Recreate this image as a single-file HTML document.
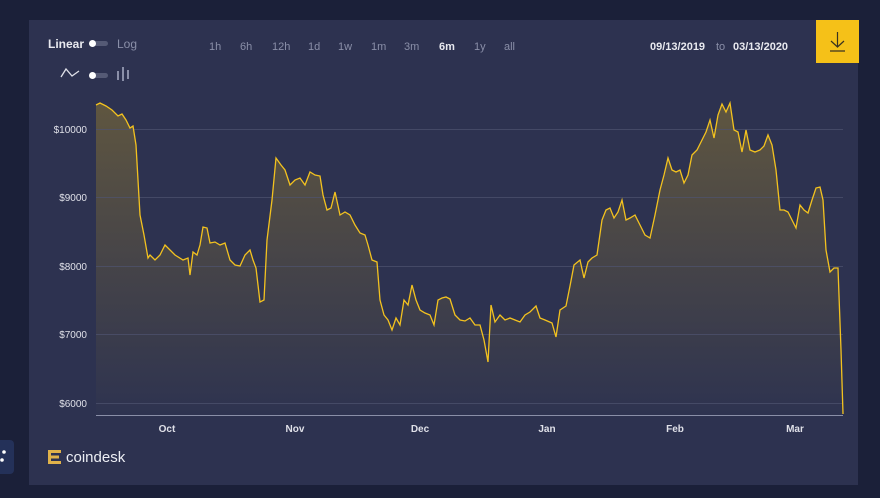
<!DOCTYPE html>
<html><head><meta charset="utf-8"><style>
html,body{margin:0;padding:0;width:880px;height:498px;overflow:hidden;background:#1b2039;font-family:"Liberation Sans",sans-serif;}
.panel{position:absolute;left:29px;top:20px;width:829px;height:465px;background:#2d3250;}
.t{position:absolute;font-size:11px;color:#8a8fa8;}
.w{color:#e8e9ef;font-weight:bold;}
.dl{position:absolute;left:816px;top:20px;width:43px;height:43px;background:#f5c118;}
.side{position:absolute;left:0;top:440px;width:14px;height:34px;background:#243159;border-radius:0 4px 4px 0;}
</style></head><body>
<div class="side"></div>
<div class="panel"></div>
<div class="t w" style="left:48px;top:37px;font-size:12px;">Linear</div>
<div style="position:absolute;left:90px;top:41px;width:18px;height:5px;background:#555a75;border-radius:3px"></div>
<div style="position:absolute;left:89px;top:40px;width:7px;height:7px;background:#fff;border-radius:50%"></div>
<div class="t" style="left:117px;top:37px;font-size:12px;">Log</div>
<svg style="position:absolute;left:60px;top:67px" width="20" height="12"><path d="M1 10 L6 2 L12 9 L19 4" stroke="#dfe0e8" fill="none" stroke-width="1.3"/></svg>
<div style="position:absolute;left:90px;top:73px;width:18px;height:5px;background:#555a75;border-radius:3px"></div>
<div style="position:absolute;left:89px;top:72px;width:7px;height:7px;background:#fff;border-radius:50%"></div>
<svg style="position:absolute;left:116px;top:66px" width="14" height="16"><g stroke="#8a8fa8" stroke-width="2"><path d="M2 5V14M7 1V15M12 4V13"/></g></svg>
<div class="t" style="left:209px;top:41px">1h</div>
<div class="t" style="left:240px;top:41px">6h</div>
<div class="t" style="left:272px;top:41px">12h</div>
<div class="t" style="left:308px;top:41px">1d</div>
<div class="t" style="left:338px;top:41px">1w</div>
<div class="t" style="left:371px;top:41px">1m</div>
<div class="t" style="left:404px;top:41px">3m</div>
<div class="t w" style="left:439px;top:41px">6m</div>
<div class="t" style="left:474px;top:41px">1y</div>
<div class="t" style="left:504px;top:41px">all</div>
<div class="t w" style="left:650px;top:41px">09/13/2019</div>
<div class="t" style="left:716px;top:41px">to</div>
<div class="t w" style="left:733px;top:41px">03/13/2020</div>
<div class="dl"><svg width="43" height="43"><path d="M21.5 12V27M15 21L21.5 27L28 21M14 31H29" stroke="#3a3320" stroke-width="1.2" fill="none"/></svg></div>
<svg style="position:absolute;left:0;top:0" width="880" height="498">
<defs><linearGradient id="g" x1="0" y1="0" x2="0" y2="1"><stop offset="0" stop-color="#5f5640"/><stop offset="1" stop-color="#2e3350"/></linearGradient></defs>
<polygon fill="url(#g)" points="96,415 96,105 100,103 106,106 112,110 118,116 122,114 126,120 130,128 133,126 136,145 140,215 144,235 148,258 150,255 155,260 160,255 165,245 170,250 175,255 183,260 188,258 190,275 193,252 197,255 200,245 203,227 207,228 210,243 215,242 220,245 225,243 230,260 235,265 240,266 245,255 250,250 253,260 256,268 260,302 264,300 267,240 272,200 276,158 281,165 285,170 290,185 295,180 300,178 305,185 310,172 315,175 320,176 323,195 327,210 331,208 335,192 340,215 345,212 350,215 355,225 360,233 365,235 368,245 372,260 377,262 380,300 384,315 388,320 392,330 396,318 400,325 404,300 408,305 412,285 416,300 420,310 425,313 430,315 434,325 438,300 442,298 446,297 450,299 455,315 460,320 465,321 470,318 475,325 480,325 484,340 488,362 491,305 495,322 500,315 505,320 510,318 515,320 520,322 525,315 530,312 536,306 540,318 545,320 552,323 556,337 560,310 566,306 570,286 574,265 580,260 584,278 588,262 592,258 597,255 602,220 606,210 610,208 614,218 618,212 622,200 626,220 630,218 635,215 640,225 645,235 650,238 655,215 660,190 664,175 668,158 672,170 676,172 680,170 684,183 688,175 692,155 697,150 702,140 706,132 710,120 714,138 718,115 722,104 726,112 730,103 734,130 738,132 742,152 746,130 750,150 755,152 760,150 764,146 768,135 772,145 776,170 780,210 784,210 788,212 792,220 796,228 800,205 804,210 808,213 812,200 816,188 820,187 823,200 826,250 830,272 834,268 838,268 841,350 843,414 843,415"/>
<g stroke="#4f5470" stroke-width="1" opacity="0.7"><path d="M96 129.5H843M96 197.5H843M96 266.5H843M96 334.5H843M96 403.5H843"/></g>
<path d="M96 415.5H843" stroke="#8a8fa8" stroke-width="1"/>
<g font-size="10" fill="#dfe0e8" text-anchor="end" font-family="Liberation Sans"><text x="87" y="133">$10000</text><text x="87" y="201">$9000</text><text x="87" y="270">$8000</text><text x="87" y="338">$7000</text><text x="87" y="407">$6000</text></g>
<g font-size="10" fill="#dfe0e8" font-weight="bold" text-anchor="middle" font-family="Liberation Sans"><text x="167" y="432">Oct</text><text x="295" y="432">Nov</text><text x="420" y="432">Dec</text><text x="547" y="432">Jan</text><text x="675" y="432">Feb</text><text x="795" y="432">Mar</text></g>
<polyline fill="none" stroke="#f3c21f" stroke-width="1.3" points="96,105 100,103 106,106 112,110 118,116 122,114 126,120 130,128 133,126 136,145 140,215 144,235 148,258 150,255 155,260 160,255 165,245 170,250 175,255 183,260 188,258 190,275 193,252 197,255 200,245 203,227 207,228 210,243 215,242 220,245 225,243 230,260 235,265 240,266 245,255 250,250 253,260 256,268 260,302 264,300 267,240 272,200 276,158 281,165 285,170 290,185 295,180 300,178 305,185 310,172 315,175 320,176 323,195 327,210 331,208 335,192 340,215 345,212 350,215 355,225 360,233 365,235 368,245 372,260 377,262 380,300 384,315 388,320 392,330 396,318 400,325 404,300 408,305 412,285 416,300 420,310 425,313 430,315 434,325 438,300 442,298 446,297 450,299 455,315 460,320 465,321 470,318 475,325 480,325 484,340 488,362 491,305 495,322 500,315 505,320 510,318 515,320 520,322 525,315 530,312 536,306 540,318 545,320 552,323 556,337 560,310 566,306 570,286 574,265 580,260 584,278 588,262 592,258 597,255 602,220 606,210 610,208 614,218 618,212 622,200 626,220 630,218 635,215 640,225 645,235 650,238 655,215 660,190 664,175 668,158 672,170 676,172 680,170 684,183 688,175 692,155 697,150 702,140 706,132 710,120 714,138 718,115 722,104 726,112 730,103 734,130 738,132 742,152 746,130 750,150 755,152 760,150 764,146 768,135 772,145 776,170 780,210 784,210 788,212 792,220 796,228 800,205 804,210 808,213 812,200 816,188 820,187 823,200 826,250 830,272 834,268 838,268 841,350 843,414"/>
<g fill="#e0b24a"><rect x="48" y="450" width="3" height="14"/><rect x="51" y="450" width="10" height="3"/><rect x="51" y="455.5" width="8" height="3"/><rect x="51" y="461" width="10" height="3"/></g>
<text x="66" y="462" font-size="15" fill="#eceef4" font-family="Liberation Sans">coindesk</text>
<circle cx="4" cy="452" r="1.8" fill="#fff"/><circle cx="2" cy="460" r="1.8" fill="#fff"/>
</svg>
</body></html>
